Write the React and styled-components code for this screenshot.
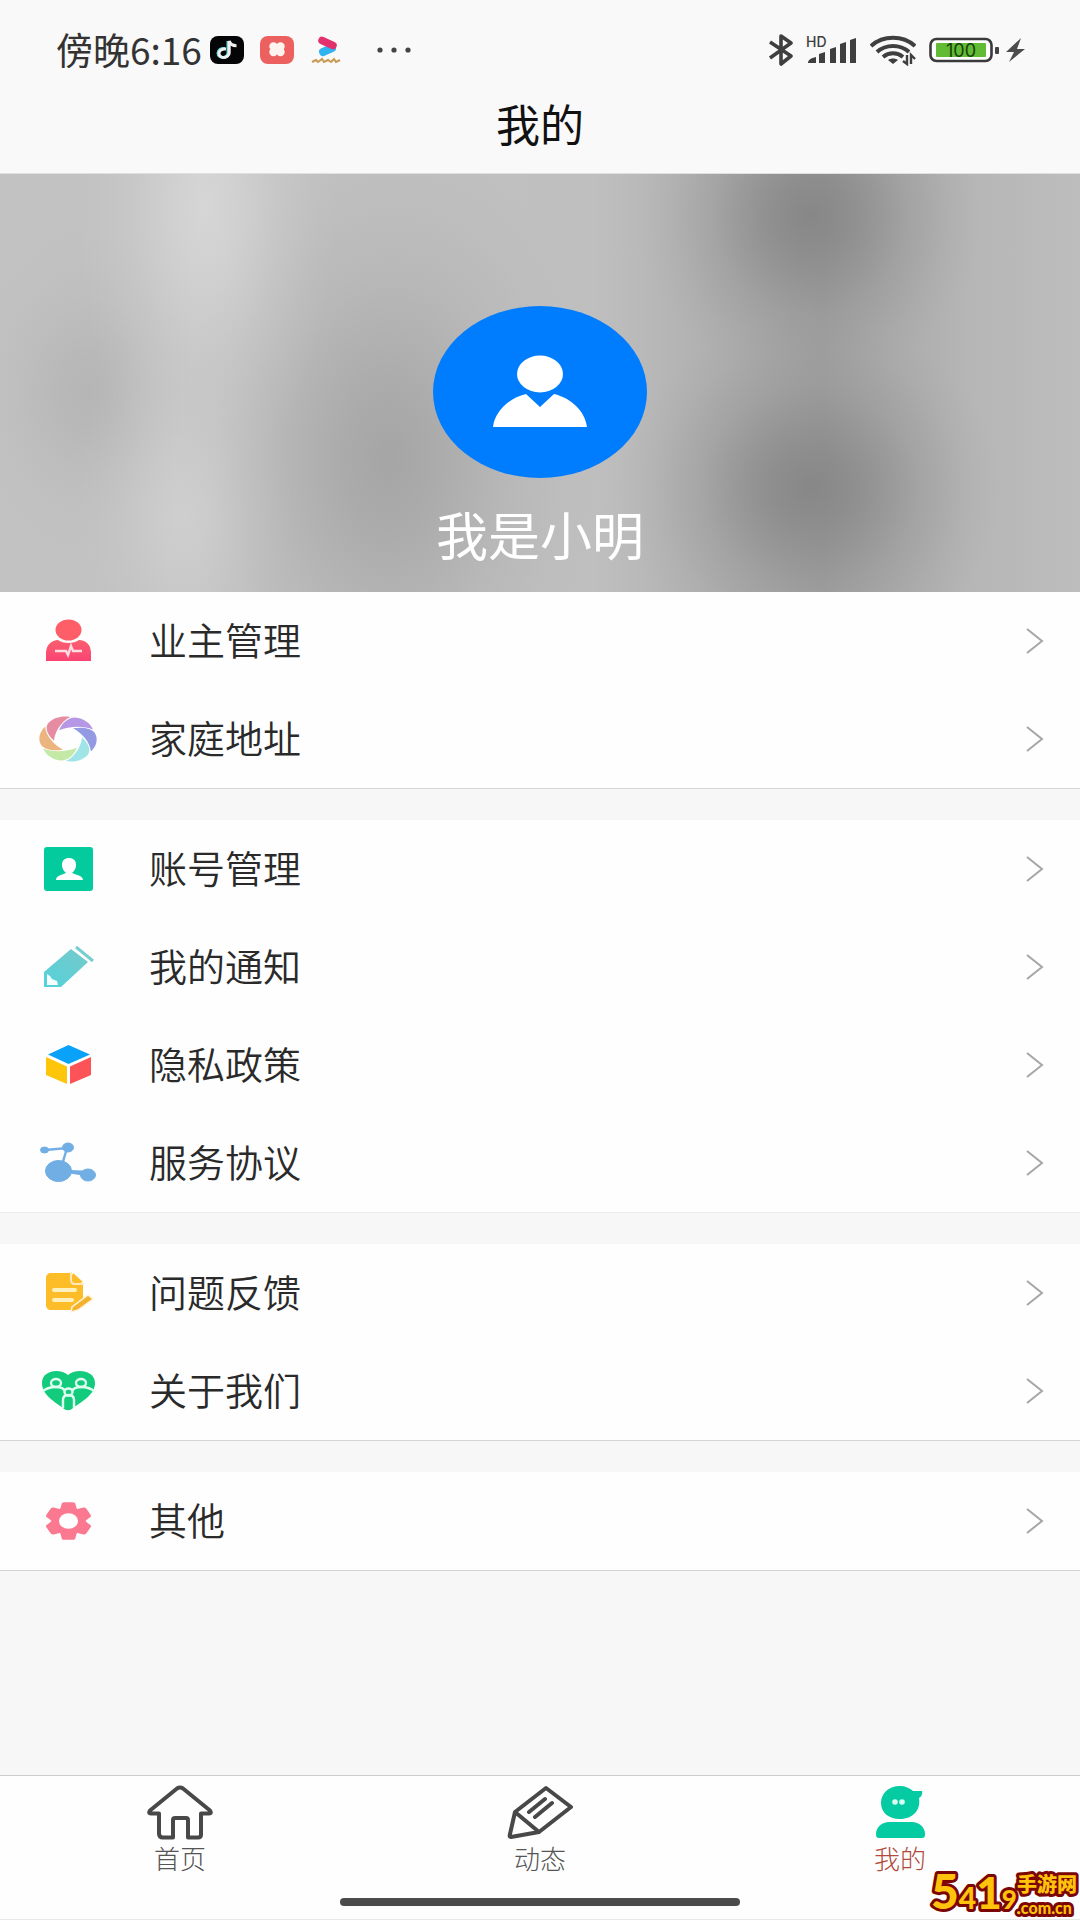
import React from "react";
import styled, { createGlobalStyle } from "styled-components";

const GlobalStyle = createGlobalStyle`
  * {
    box-sizing: border-box;
  }
  body {
    margin: 0;
    background: #f7f7f7;
    font-family: "Noto Sans CJK SC", sans-serif;
    color: #2a2a2a;
  }
`;

const Page = styled.div`
  min-height: 100vh;
  display: flex;
  flex-direction: column;
`;

const Header = styled.header`
  background: #f9f9f9;
  border-bottom: 1px solid #e0e0e0;
`;

const StatusBar = styled.div`
  display: flex;
  justify-content: space-between;
  align-items: center;
  height: 100px;
  padding: 0 54px 0 56px;
`;

const StatusGroup = styled.div`
  display: flex;
  align-items: center;
  gap: ${(props) => props.$gap}px;
`;

const Clock = styled.span`
  font-size: 37px;
  font-weight: 400;
  line-height: 40px;
  margin-right: -8px;
  padding-bottom: 2px;
  color: #333;
`;

const Title = styled.h1`
  margin: 0;
  height: 73px;
  font-size: 44px;
  font-weight: 400;
  line-height: 46px;
  text-align: center;
  color: #111;
`;

const blob = (x, y, width, height, shade) =>
  `radial-gradient(ellipse ${width}px ${height}px at ${x}% ${y}%, rgba(${shade}, ${shade}, ${shade}, 0.9) 0%, rgba(${shade}, ${shade}, ${shade}, 0.7) 22%, rgba(${shade}, ${shade}, ${shade}, 0.25) 58%, rgba(${shade}, ${shade}, ${shade}, 0.07) 82%, rgba(${shade}, ${shade}, ${shade}, 0) 100%)`;

const Hero = styled.section`
  height: 418px;
  padding-top: 132px;
  display: flex;
  flex-direction: column;
  align-items: center;
  background:
    ${blob(75, 10, 170, 170, 132)},
    ${blob(75, 75, 190, 170, 132)},
    ${blob(19, 8, 130, 280, 216)},
    ${blob(17, 82, 110, 200, 208)},
    ${blob(36, 68, 210, 320, 162)},
    ${blob(8, 52, 120, 160, 180)},
    linear-gradient(90deg, #c2c2c2 0%, #bfbfbf 55%, #a2a2a2 76%, #b6b6b6 90%, #bdbdbd 100%);
`;

const UserName = styled.div`
  margin-top: 26px;
  font-size: 52px;
  line-height: 60px;
  color: #fff;
`;

const Group = styled.ul`
  list-style: none;
  margin: 0 0 31px;
  padding: 0;
  background: #fefefe;
  border-bottom: 1px solid ${(props) => (props.$faint ? "#ececec" : "#d4d4d4")};
`;

const Row = styled.a`
  display: flex;
  align-items: center;
  height: 98px;
  padding: 0 36px 0 38px;
  color: inherit;
  text-decoration: none;
`;

const RowLabel = styled.span`
  flex: 1;
  margin-left: 51px;
  padding-bottom: 4px;
  font-size: 38px;
  font-weight: 350;
  line-height: 48px;
`;

const TabBar = styled.nav`
  margin-top: auto;
  height: 145px;
  background: #fefefe;
  border-top: 1px solid #cdcdcd;
  border-bottom: 1px solid #e8e8e8;
`;

const Tabs = styled.div`
  display: grid;
  grid-template-columns: repeat(3, 1fr);
  height: 122px;
`;

const Tab = styled.a`
  display: flex;
  flex-direction: column;
  align-items: center;
  padding-top: 8px;
  font-size: 26px;
  font-weight: 300;
  line-height: 36px;
  color: ${(props) => (props.$active ? "#b04a3c" : "#555")};
  text-decoration: none;
`;

const HomeIndicator = styled.div`
  width: 37%;
  height: 8px;
  margin: 0 auto;
  border-radius: 4px;
  background: #4b4b4b;
`;

const Screen = styled.div`
  position: relative;
`;

const Watermark = styled.svg`
  position: absolute;
  right: 0;
  bottom: 0;
  font-family: Lato, "Noto Sans CJK SC", sans-serif;
  font-weight: 900;
`;

/* status bar */

const TiktokIcon = () => (
  <svg width="34" height="28" viewBox="0 0 34 28">
    <rect width="34" height="28" rx="8" fill="#050508" />
    <g fill="none" strokeWidth="3">
      <path d="M15 12.500c-4-.5-7 1.500-7 4.500s2.500 4.500 5 4.500 5-2 5-4.500V5" stroke="#58d8dc" />
      <path d="M16 13c-4-.5-7 1.500-7 4.200s2.500 4.300 5 4.300 5.200-2 5.200-4.500V5c.8 3 3.500 4.700 7.300 4.700" stroke="#eee" />
    </g>
  </svg>
);

const FlowerIcon = () => (
  <svg width="34" height="28" viewBox="0 0 34 28">
    <rect width="34" height="28" rx="8" fill="#ec615f" />
    <g fill="#fff3ef">
      <circle cx="13.500" cy="10.500" r="4.200" />
      <circle cx="20.500" cy="10.500" r="4.200" />
      <circle cx="13.500" cy="16" r="4.200" />
      <circle cx="20.500" cy="16" r="4.200" />
      <rect x="13" y="9" width="8" height="8" />
    </g>
  </svg>
);

const VideoIcon = () => (
  <svg width="34" height="28" viewBox="0 0 34 28">
    <path d="M13 16l9-4" stroke="#30b4f0" strokeWidth="8" strokeLinecap="round" />
    <path d="M12 4.500l11 5" stroke="#e2316f" strokeWidth="7.500" strokeLinecap="round" />
    <path d="M2 26l4-2 2 2 4-3 2 3 4-2 3 2 3-3 2 3 4-2" fill="none" stroke="#c79a50" strokeWidth="2" />
  </svg>
);

const DotsIcon = () => (
  <svg width="36" height="8" viewBox="0 0 36 8" fill="#444">
    <circle cx="4" cy="4" r="2.600" />
    <circle cx="18" cy="4" r="2.600" />
    <circle cx="32" cy="4" r="2.600" />
  </svg>
);

const BluetoothIcon = () => (
  <svg width="26" height="32" viewBox="0 0 26 32" fill="none" stroke="#3f3f3f" strokeWidth="3.600" strokeLinejoin="round">
    <path d="M2 8l21 14-10 8V2l10 7L2 24" />
  </svg>
);

const SignalIcon = () => (
  <svg width="52" height="36" viewBox="0 -2 52 36" fill="#3f3f3f">
    <text x="0" y="13" fontSize="14" fontWeight="500" fontFamily="Inter, sans-serif">
      HD
    </text>
    <path d="M2 29c0-3 3-5 8-6v6zM13 20l6-2v11h-6zM24 15l6-2v16h-6zM34 10l6-2v21h-6zM44 6l6-2v25h-6z" />
  </svg>
);

const WifiIcon = () => (
  <svg width="46" height="32" viewBox="0 0 46 32" fill="none" stroke="#3f3f3f" strokeWidth="4">
    <path d="M1 12c12-11 32-11 44 0M7 18c9-8 23-8 32 0M13 23c6-5 14-5 20 0" />
    <path d="M18 26c3-2 7-2 10 0l-5 4z" fill="#3f3f3f" stroke="none" />
    <path d="M37 21v9l-4-3M41 30v-9l4 4" strokeWidth="2.400" />
  </svg>
);

const BatteryIcon = () => (
  <svg width="98" height="32" viewBox="0 0 98 32">
    <rect x="2.500" y="5" width="61" height="22" rx="6" fill="#fff" stroke="#3a3a3a" strokeWidth="2.600" />
    <rect x="8" y="9" width="50" height="14" rx="1" fill="#62bb35" />
    <text x="33" y="23" textAnchor="middle" fontSize="18" fontFamily="Inter, sans-serif" fill="#174009">
      100
    </text>
    <rect x="67" y="13" width="4" height="7" rx="1" fill="#444" />
    <path d="M93 4L78 18h8l-5 10 16-13h-8z" fill="#4c4c4c" />
  </svg>
);

/* hero */

const Avatar = () => (
  <svg width="214" height="172" viewBox="0 0 214 172">
    <ellipse cx="107" cy="86" rx="107" ry="86" fill="#007cfe" />
    <ellipse cx="107" cy="68" rx="23" ry="18.500" fill="#fff" />
    <path d="M60 121c2-16 16-29 33-33l14 13 14-13c17 4 31 17 33 33z" fill="#fff" />
  </svg>
);

/* menu */

const IconFrame = ({ children }) => (
  <svg width="60" height="52" viewBox="0 0 60 52" aria-hidden="true">
    {children}
  </svg>
);

const OwnerIcon = () => (
  <IconFrame>
    <defs>
      <linearGradient id="owner" x1="0" y1="0" x2="0" y2="1">
        <stop offset="0" stopColor="#fa5f6e" />
        <stop offset="1" stopColor="#fa4474" />
      </linearGradient>
    </defs>
    <ellipse cx="30.500" cy="15" rx="13" ry="10.500" fill="#fd5e68" />
    <path d="M8 46V38c0-8 6-13 12-13 5 4 16 4 21 0 7 0 12 5 12 13v8z" fill="url(#owner)" />
    <path d="M17 36h11l2 4 3-9 2 5h9" fill="none" stroke="#ffdce2" strokeWidth="2.400" />
  </IconFrame>
);

const petals = ["#b597e6", "#9399e3", "#9fe5e8", "#c4e8a5", "#ecb57f", "#e58ba2"];

const ApertureIcon = () => (
  <IconFrame>
    <g transform="translate(30 26) scale(1 .8)">
      {petals.map((color, i) => (
        <path
          key={color}
          d="M-9-11C-6-20 0-27 7-27 16-26 22-20 25-12 15-17 1-16-9-11z"
          fill={color}
          transform={`rotate(${i * 60})`}
        />
      ))}
    </g>
  </IconFrame>
);

const AccountIcon = () => (
  <IconFrame>
    <rect x="6" y="4" width="49" height="44" rx="3" fill="#04cb9e" />
    <path d="M18 37c0-4 5-5 10-7-2-2-4-4-4-8 0-5 3-7 7-7s7 2 7 7c0 4-2 6-4 8 5 2 11 3 11 7z" fill="#fff" />
  </IconFrame>
);

const NoticeIcon = () => (
  <IconFrame>
    <defs>
      <linearGradient id="notice" x1="0" y1="1" x2="1" y2="0">
        <stop offset="0" stopColor="#53d2da" />
        <stop offset="1" stopColor="#77c9ca" />
      </linearGradient>
    </defs>
    <path d="M6 31L33 8l17 13-27 25H6z" fill="url(#notice)" />
    <path d="M9 33l3 2 2 3 5 2 1 4H9z" fill="#f4ffff" />
    <path d="M38 6l17 14" stroke="#79cdd0" strokeWidth="3" />
  </IconFrame>
);

const CubeIcon = () => (
  <IconFrame>
    <path d="M30.500 6L52 15.500 30.500 25 10 15.500z" fill="#0aa2f8" />
    <path d="M8 18l21 9.500V45L8 36z" fill="#fdc60b" />
    <path d="M53 18l-21 9.500V45l21-9z" fill="#fb5357" />
  </IconFrame>
);

const MoleculeIcon = () => (
  <IconFrame>
    <g fill="#70aee4" stroke="#70aee4">
      <path d="M7 13l22-2-5 17 1 6 26 1" fill="none" strokeWidth="2.400" />
      <ellipse cx="6.500" cy="13" rx="4" ry="3" />
      <ellipse cx="30" cy="10.500" rx="5.500" ry="4.500" />
      <ellipse cx="20.500" cy="34" rx="13" ry="10.500" />
      <ellipse cx="50" cy="38" rx="7.500" ry="6" />
      <path d="M32 35l13 2" strokeWidth="3" />
    </g>
  </IconFrame>
);

const FeedbackIcon = () => (
  <IconFrame>
    <path d="M13 6h20l12 11v19L34 43H13c-3 0-5-2-5-5V11c0-3 2-5 5-5z" fill="#fcbd28" />
    <path d="M35 6v6c0 2 2 3 4 3h6z" fill="#fcbd28" />
    <path d="M33 5v8c0 3 2 4 4 4h9" fill="none" stroke="#ffe9b8" strokeWidth="2" />
    <path d="M16 23h21M16 33h18" stroke="#fff1bd" strokeWidth="4" strokeLinecap="round" />
    <path d="M33 45l1-5 16-12 5 4-15 11z" fill="#f4b12e" stroke="#fff4d8" strokeWidth="1.500" />
  </IconFrame>
);

const HeartIcon = () => (
  <IconFrame>
    <path d="M30 10C38 3 57 5 57 18c0 12-14 19-22 25-3 3-7 3-10 0C17 37 4 30 4 18 4 5 22 3 30 10z" fill="#13cb7d" />
    <g fill="none" stroke="#dffff0" strokeWidth="2.400">
      <ellipse cx="18" cy="18" rx="5" ry="4" />
      <ellipse cx="43" cy="18" rx="5" ry="4" />
      <ellipse cx="30.500" cy="27" rx="4" ry="3.500" />
      <path d="M4 27c4-4 8-5 14-5s8 2 9 4M57 27c-4-4-8-5-14-5s-8 2-9 4M25 43v-8c0-3 2-5 5.500-5s5.500 2 5.500 5v8" />
    </g>
  </IconFrame>
);

const GearIcon = () => (
  <IconFrame>
    <g transform="translate(30.500 26) scale(1 .82)">
      <g fill="#fb7990">
        <circle r="17" />
        {[0, 60, 120, 180, 240, 300].map((angle) => (
          <path key={angle} d="M-9-12l2-8c0-2 1-3 3-3H4c2 0 3 1 3 3l2 8z" transform={`rotate(${angle})`} />
        ))}
      </g>
      <circle r="9.500" fill="#fff" />
    </g>
  </IconFrame>
);

const Chevron = () => (
  <svg width="18" height="26" viewBox="0 0 18 26" fill="none" stroke="#a6a6a6" strokeWidth="2">
    <path d="M1 1l15 12L1 25" />
  </svg>
);

/* tabs */

const HomeIcon = () => (
  <svg width="66" height="56" viewBox="0 0 66 56" fill="none" stroke="#484848" strokeWidth="4" strokeLinejoin="round">
    <path d="M30 4.500q3-2 6 0l27 22q2 3-1 3h-8v21q0 3-3 3H41V36q0-2-2-2H28q-2 0-2 2v17.500H16q-4 0-4-4v-20H4q-3 0-1-3z" />
  </svg>
);

const PencilIcon = () => (
  <svg width="66" height="56" viewBox="0 0 66 56" fill="none" stroke="#484848" strokeWidth="4" strokeLinejoin="round" strokeLinecap="round">
    <path d="M8 28L39 4l25 19-32 25-28 5q-2 0-1-3zM8 28l24 20M22 28l16-13M28 33l17-14" />
  </svg>
);

const ProfileIcon = () => (
  <svg width="66" height="56" viewBox="0 0 66 56" fill="#04cba2">
    <path d="M33 2c5 0 10 2 13 5h9c1 3-1 6-3 7 2 12-6 21-19 21-12 0-19-7-19-16C14 9 22 2 33 2z" />
    <path d="M9 50c0-7 6-12 13-12h23c7 0 13 5 13 12 0 3-1 4-3 4H12c-2 0-3-1-3-4z" />
    <g fill="#d6fff4">
      <circle cx="28" cy="18" r="2.800" />
      <circle cx="35" cy="18" r="2.800" />
    </g>
  </svg>
);

const menu = [
  [
    { label: "业主管理", Icon: OwnerIcon },
    { label: "家庭地址", Icon: ApertureIcon },
  ],
  [
    { label: "账号管理", Icon: AccountIcon },
    { label: "我的通知", Icon: NoticeIcon },
    { label: "隐私政策", Icon: CubeIcon },
    { label: "服务协议", Icon: MoleculeIcon },
  ],
  [
    { label: "问题反馈", Icon: FeedbackIcon },
    { label: "关于我们", Icon: HeartIcon },
  ],
  [{ label: "其他", Icon: GearIcon }],
];

const tabs = [
  { label: "首页", Icon: HomeIcon },
  { label: "动态", Icon: PencilIcon },
  { label: "我的", Icon: ProfileIcon, active: true },
];

const App = () => {
  return (
    <Screen>
      <GlobalStyle />
      <Page>
        <Header>
          <StatusBar>
            <StatusGroup $gap={16}>
              <Clock>傍晚6:16</Clock>
              <TiktokIcon />
              <FlowerIcon />
              <VideoIcon />
              <span />
              <DotsIcon />
            </StatusGroup>
            <StatusGroup $gap={12}>
              <BluetoothIcon />
              <SignalIcon />
              <WifiIcon />
              <BatteryIcon />
            </StatusGroup>
          </StatusBar>
          <Title>我的</Title>
        </Header>
        <Hero>
          <Avatar />
          <UserName>我是小明</UserName>
        </Hero>
        <main>
          {menu.map((rows, i) => (
            <Group key={i} $faint={i === 1}>
              {rows.map(({ label, Icon }) => (
                <li key={label}>
                  <Row href="#">
                    <Icon />
                    <RowLabel>{label}</RowLabel>
                    <Chevron />
                  </Row>
                </li>
              ))}
            </Group>
          ))}
        </main>
        <TabBar>
          <Tabs>
            {tabs.map(({ label, Icon, active }) => (
              <Tab key={label} href="#" $active={active}>
                <Icon />
                {label}
              </Tab>
            ))}
          </Tabs>
          <HomeIndicator />
        </TabBar>
      </Page>
      <Watermark width="152" height="60" viewBox="0 0 152 60">
        <g fill="#ffc30b" stroke="#7c0606" strokeWidth="6" strokeLinejoin="round" paintOrder="stroke">
          <text x="3" y="49" fontSize="48">
            5<tspan fontSize="30">4</tspan>
            <tspan fontSize="44">1</tspan>
            <tspan fontSize="26">9</tspan>
          </text>
          <text x="89" y="32" fontSize="20">
            手游网
          </text>
          <text x="89" y="54" fontSize="16">
            .com.cn
          </text>
        </g>
      </Watermark>
    </Screen>
  );
};

export default App;
